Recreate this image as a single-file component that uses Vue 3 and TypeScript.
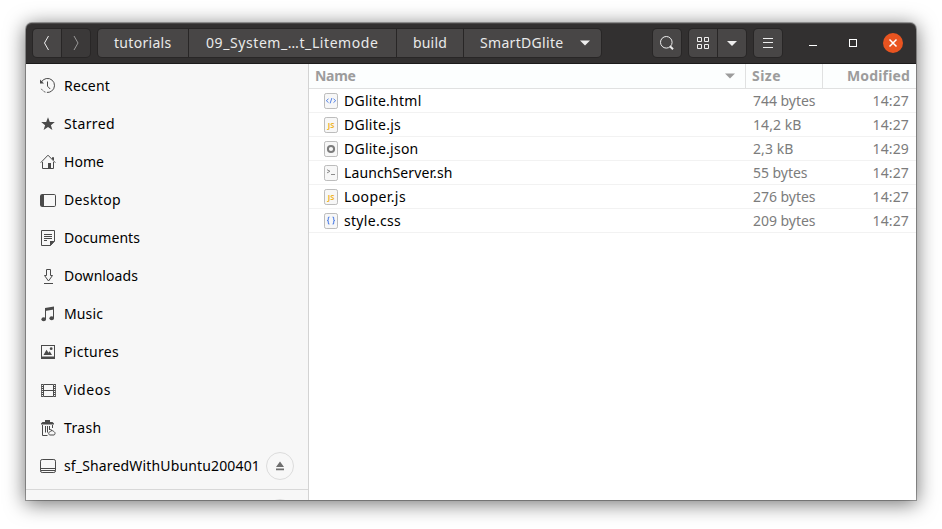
<script setup lang="ts">
import type { Directive } from 'vue'

interface Place { name: string; icon: string; width: number; eject?: boolean }
interface FileRow { name: string; kind: string; width: number; size: string; sizeWidth: number; time: string }

// Tracks a label so that its text spans the given number of pixels.
const vFit: Directive<HTMLElement, number> = {
  mounted(el, binding) {
    const natural = el.getBoundingClientRect().width
    const count = (el.textContent ?? '').length
    el.style.letterSpacing = `${(binding.value - natural) / count}px`
  },
}

const crumbs = [
  { name: 'tutorials', width: 57.5, size: 'c1' },
  { name: '09_System_…t_Litemode', width: 172.5, size: 'c2' },
  { name: 'build', width: 34, size: 'c3' },
]

const places: Place[] = [
  { name: 'Recent', icon: 'recent', width: 46 },
  { name: 'Starred', icon: 'star', width: 51 },
  { name: 'Home', icon: 'home', width: 40 },
  { name: 'Desktop', icon: 'desktop', width: 57 },
  { name: 'Documents', icon: 'documents', width: 76 },
  { name: 'Downloads', icon: 'downloads', width: 74 },
  { name: 'Music', icon: 'music', width: 39 },
  { name: 'Pictures', icon: 'pictures', width: 55 },
  { name: 'Videos', icon: 'videos', width: 47 },
  { name: 'Trash', icon: 'trash', width: 37.5 },
  { name: 'sf_SharedWithUbuntu200401', icon: 'drive', width: 196, eject: true },
]

const files: FileRow[] = [
  { name: 'DGlite.html', kind: 'html', width: 77.5, size: '744 bytes', sizeWidth: 62.5, time: '14:27' },
  { name: 'DGlite.js', kind: 'js', width: 57, size: '14,2 kB', sizeWidth: 48.5, time: '14:27' },
  { name: 'DGlite.json', kind: 'json', width: 74.5, size: '2,3 kB', sizeWidth: 40.5, time: '14:29' },
  { name: 'LaunchServer.sh', kind: 'sh', width: 108.5, size: '55 bytes', sizeWidth: 54.5, time: '14:27' },
  { name: 'Looper.js', kind: 'js', width: 62, size: '276 bytes', sizeWidth: 62.5, time: '14:27' },
  { name: 'style.css', kind: 'css', width: 57, size: '209 bytes', sizeWidth: 62.5, time: '14:27' },
]
</script>

<template>
  <div class="stage">
    <div class="window">
      <header class="bar">
        <div class="group nav">
          <button class="btn"><svg width="28" height="28"><path d="M15.5 7 L11.5 14 L15.5 21" class="ln" /></svg></button>
          <button class="btn off"><svg width="28" height="28"><path d="M12 7 L16 14 L12 21" class="ln dim" /></svg></button>
        </div>
        <div class="group path">
          <button v-for="c in crumbs" :key="c.name" class="btn crumb" :class="c.size"><span v-fit="c.width">{{ c.name }}</span></button>
          <button class="btn crumb c4">
            <span v-fit="83.5">SmartDGlite</span>
            <svg width="10" height="6"><path d="M0 .5H10L5 5.5Z" fill="#eee" /></svg>
          </button>
        </div>
        <div class="group search">
          <button class="btn"><svg width="28" height="28"><circle cx="13.3" cy="13.3" r="5.8" class="ln" /><path d="M17 17.2L20 20.2" class="ln thick" /></svg></button>
        </div>
        <div class="group views">
          <button class="btn"><svg width="28" height="28"><path d="M8.5 8.5h4v4h-4zM15.5 8.5h4v4h-4zM8.5 15.5h4v4h-4zM15.5 15.5h4v4h-4z" class="ln" /></svg></button>
          <button class="btn"><svg width="28" height="28"><path d="M9 12H19L14 17Z" fill="#eee" /></svg></button>
        </div>
        <div class="group">
          <button class="btn"><svg width="28" height="28"><path d="M9 9.5H19M9 13.5H19M9 18.5H19" class="ln" /></svg></button>
        </div>
        <svg class="min" width="8" height="20"><path d="M0 12.5H8" class="ln white" /></svg>
        <svg class="max" width="8" height="20"><rect x=".5" y="6.5" width="7" height="7" class="ln white" /></svg>
        <svg class="close" width="20" height="20"><circle cx="10" cy="10" r="10" fill="#e95420" /><path d="M6.5 6.5L13.5 13.5M13.5 6.5L6.5 13.5" class="ln white cross" /></svg>
      </header>

      <div class="body">
        <aside class="side">
          <div v-for="p in places" :key="p.name" class="place">
            <svg class="ico" width="16" height="16" viewBox="0 0 16 16">
              <g v-if="p.icon === 'recent'">
                <path d="M1.3 4.2A7 7 0 1 1 1 10" stroke-dasharray="30 1.5 2 1.2 2 1" /><path d="M0 1.5V5.5H4Z" class="solid" /><path d="M7.5 3.5V8.2L10.2 11" />
              </g>
              <path v-else-if="p.icon === 'star'" class="solid" d="M8 1.2L9.8 6H14.8L10.9 9.2L12.4 14L8 11.1L3.6 14L5.1 9.2L1.2 6H6.2Z" />
              <g v-else-if="p.icon === 'home'">
                <path d="M.7 8.7L8 1.2L15.3 8.7M2.5 8V14.5H13.5V8M12.5 5.3V3.5H13.5V6" /><path d="M8 9H11V15H8Z" class="solid" />
              </g>
              <g v-else-if="p.icon === 'desktop'">
                <rect x=".5" y="2.5" width="15" height="12" rx="1.2" /><path d="M1 3H4V14H1Z" class="solid" />
              </g>
              <g v-else-if="p.icon === 'documents'">
                <path d="M1.5 .5H14.5V11L10.5 15.5H1.5ZM4 4.5H12M4 6.5H12M4 8.5H12M4 10.5H7" /><path d="M10 11H15L10 16Z" class="solid" />
              </g>
              <path v-else-if="p.icon === 'downloads'" d="M6.5 1.5H10.5V7.5H12.5L8.5 13L4.5 7.5H6.5ZM4 15.5H13" />
              <g v-else-if="p.icon === 'music'">
                <path d="M5.5 13V3M13.5 12V2" /><path d="M5 2L14 .5V3.5L5 5Z" class="solid" /><ellipse cx="3.7" cy="13.2" rx="2.3" ry="2" class="solid" /><ellipse cx="11.7" cy="12.2" rx="2.3" ry="2" class="solid" />
              </g>
              <g v-else-if="p.icon === 'pictures'">
                <rect x="1.5" y="1.5" width="13" height="13" /><path d="M1 12.5H15V15H1ZM3.5 11L6.5 5.7L8.5 8.8L9.7 7.3L12 11Z" class="solid" /><circle cx="11.2" cy="4.7" r="1.4" class="solid" />
              </g>
              <g v-else-if="p.icon === 'videos'">
                <path d="M3.5 2.5H13.5V14.5H3.5ZM3.5 8.5H13.5" /><path d="M2.3 2V15M14.7 2V15" stroke-width="1.6" stroke-dasharray="1 1" /><path d="M1.5 2V15M15.5 2V15" stroke-width=".8" />
              </g>
              <g v-else-if="p.icon === 'trash'">
                <path d="M1 3.5L2.5 2H5V0H10V2H12.5L14 3.5V4.5H1Z" class="solid" /><path d="M2.5 5V15.5H7.5M12.5 5V8M5.5 6V12.5M7.5 6V12.5M9.5 6V10" /><path d="M10.5 9.5L11.7 10.8C8.5 12 8 13.2 9.5 15H14.2C15.8 13.2 15 12 12.7 10.8Z" />
              </g>
              <g v-else>
                <rect x=".5" y="1.5" width="15" height="13" rx="1.7" /><path d="M1 10.5H15M1 12.5H15" />
              </g>
            </svg>
            <span v-fit="p.width" class="label">{{ p.name }}</span>
            <span v-if="p.eject" class="eject"><svg width="10" height="10"><path d="M5 .5L9 6H1ZM1 7.5H9V9.2H1Z" fill="#6e6e6e" /></svg></span>
          </div>
          <div class="more"><span class="eject next"></span></div>
        </aside>

        <main class="list">
          <div class="row head">
            <div class="name"><span v-fit="40.5">Name</span><svg class="sort" width="10" height="6"><path d="M0 .5H10L5 5.5Z" fill="#9c9c9c" /></svg></div>
            <div class="size"><span v-fit="29">Size</span></div>
            <div class="time"><span v-fit="63">Modified</span></div>
          </div>
          <div v-for="f in files" :key="f.name" class="row">
            <div class="name">
              <svg class="file" width="14" height="16" viewBox="0 0 14 16">
                <rect x=".5" y=".5" width="13" height="15" rx="1.7" fill="#f7f7f7" stroke="#bcbcbc" />
                <path v-if="f.kind === 'html'" d="M4.5 5.8L2.3 7.7L4.5 9.6M9.5 5.8L11.7 7.7L9.5 9.6M7.9 5L6.1 10.4" fill="none" stroke="#5583e6" stroke-width="1" />
                <text v-else-if="f.kind === 'js'" x="7" y="10.5" class="glyph">JS</text>
                <circle v-else-if="f.kind === 'json'" cx="7" cy="8" r="3.1" fill="none" stroke="#7c7c7c" stroke-width="2" />
                <path v-else-if="f.kind === 'sh'" d="M3 4.7L6 6.3L3 7.9M7 9.5H11" fill="none" stroke="#8c8c8c" stroke-width="1" />
                <path v-else d="M5.5 4Q4.2 4 4.3 5.5Q4.5 7.5 3 7.5Q4.5 7.5 4.3 9.5Q4.2 11 5.5 11M8.5 4Q9.8 4 9.7 5.5Q9.5 7.5 11 7.5Q9.5 7.5 9.7 9.5Q9.8 11 8.5 11" fill="none" stroke="#5583e6" stroke-width="1.1" />
              </svg>
              <span v-fit="f.width">{{ f.name }}</span>
            </div>
            <div class="size"><span v-fit="f.sizeWidth">{{ f.size }}</span></div>
            <div class="time"><span v-fit="36.5">{{ f.time }}</span></div>
          </div>
        </main>
      </div>
    </div>
  </div>
</template>

<style>
body { margin: 0; background: #fff; overflow: hidden; }
</style>

<style scoped>
.stage {
  box-sizing: border-box; width: 942px; height: 529px; padding: 23px 26px 29px;
  overflow: hidden; font: 14px/20px "Noto Sans", "Open Sans", sans-serif; color: #000;
}
.window {
  display: flex; flex-direction: column; width: 890px; height: 477px; border-radius: 6px 6px 0 0;
  box-shadow: 0 0 0 1px rgba(0, 0, 0, .3), 0 3px 20px 1px rgba(0, 0, 0, .55);
}
.bar {
  box-sizing: border-box; display: flex; align-items: center; height: 41px; padding: 0 13px 0 7px;
  background: #323030; border-bottom: 1px solid #1c1b1b; border-radius: 6px 6px 0 0;
  box-shadow: inset 0 1px #4a4848; color: #eaeaea; flex: none;
}
.group { display: flex; gap: 1px; height: 28px; background: #282626; border-radius: 4px; box-shadow: 0 0 0 1px #282626; }
.btn {
  display: flex; align-items: center; justify-content: center; width: 28px; height: 28px;
  padding: 0; border: 0; background: #484646; color: inherit; font: inherit;
}
.btn:first-child { border-radius: 4px 0 0 4px; }
.btn:last-child { border-radius: 0 4px 4px 0; }
.btn:only-child { border-radius: 4px; }
.btn.off { background: #3b3939; }
.nav { margin-right: 8px; }
.crumb { justify-content: flex-start; box-sizing: border-box; padding-left: 16px; white-space: pre; }
.c1 { width: 90px; }
.c2 { width: 207px; padding-left: 17px; }
.c3 { width: 66px; }
.c4 { width: 137px; }
.c4 svg { margin-left: 16.5px; }
.search { margin-left: 52px; margin-right: 8px; }
.views { margin-right: 8px; }
.min { margin-left: 27px; }
.max { margin-left: 32px; }
.close { margin-left: 26px; }
.ln { fill: none; stroke: #eee; stroke-width: 1; }
.ln.dim { stroke: #9a9999; }
.ln.thick { stroke-width: 2; }
.ln.white { stroke: #fff; }
.ln.cross { stroke-width: 1.5; }
.body { display: flex; height: 436px; }
.side { box-sizing: border-box; width: 283px; padding-top: 3px; background: #f7f7f7; border-right: 1px solid #d3d3d3; overflow: hidden; }
.place { display: flex; align-items: center; height: 38px; padding: 0 14px; white-space: pre; }
.ico { flex: none; margin-right: 8px; fill: none; stroke: #4a4a4a; stroke-width: 1; }
.solid { fill: #4a4a4a; stroke: none; }
.eject {
  box-sizing: border-box; display: flex; align-items: center; justify-content: center;
  width: 28px; height: 28px; margin-left: auto; border: 1px solid #dcdcdc; border-radius: 50%;
}
.more { margin-top: 4px; padding: 9px 14px 0; border-top: 1px solid #d8d8d8; }
.list { width: 607px; background: #fff; }
.row { box-sizing: border-box; display: flex; height: 24px; border-bottom: 1px solid #f2f2f2; white-space: pre; }
.name, .size, .time { box-sizing: border-box; display: flex; align-items: center; }
.name { width: 437px; padding-left: 15px; }
.size { width: 77px; padding-left: 7px; color: #7c7c7c; }
.time { width: 93px; padding-right: 7px; justify-content: flex-end; color: #7c7c7c; }
.file { flex: none; margin-right: 6px; }
.glyph { font: 700 7.5px "Noto Sans", sans-serif; fill: #f0b429; text-anchor: middle; }
.head { height: 25px; background: #fcfefe; border-bottom-color: #e0e1e1; font-weight: 700; color: #9c9c9c; }
.head .name { padding: 0 10px 0 6px; border-right: 1px solid #e0e1e1; }
.head .size { padding-left: 6px; border-right: 1px solid #e0e1e1; color: inherit; }
.head .time { padding-right: 6px; color: inherit; }
.sort { margin-left: auto; }
</style>
